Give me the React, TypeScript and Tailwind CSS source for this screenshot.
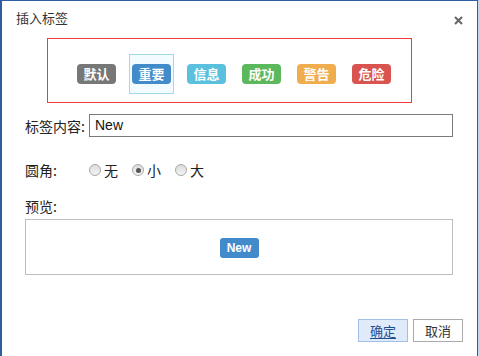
import React from "react";

const cjk = { fontFamily: '"Noto Sans CJK SC", "Liberation Sans", sans-serif' };
const latin = { fontFamily: '"Liberation Sans", "Noto Sans CJK SC", sans-serif' };

const badges = [
  { t: "默认", c: "bg-[#777777]" },
  { t: "重要", c: "bg-[#428bca]" },
  { t: "信息", c: "bg-[#5bc0de]" },
  { t: "成功", c: "bg-[#5cb85c]" },
  { t: "警告", c: "bg-[#f0ad4e]" },
  { t: "危险", c: "bg-[#d9534f]" },
];

function Radio({ checked }: { checked?: boolean }) {
  return (
    <span className="w-[12px] h-[12px] rounded-full border border-[#a8a8a8] bg-gradient-to-b from-[#dcdcdc] to-[#f4f4f4] flex items-center justify-center shrink-0">
      {checked && <span className="w-[5px] h-[5px] rounded-full bg-[#555]" />}
    </span>
  );
}

export default function App() {
  return (
    <div className="w-[480px] h-[356px] bg-white flex overflow-hidden" style={cjk}>
      <div className="flex-1 flex flex-col border-l-2 border-t border-[#2d5fa0] text-[#333]">
        <div className="h-[37px] flex items-start justify-between pt-[8px] pl-[14px] pr-[14px]">
          <span className="text-[13px] leading-[18px] text-[#333]">插入标签</span>
          <svg width="9" height="9" viewBox="0 0 9 9" className="mt-[7px]">
            <path d="M1 1 L8 8 M8 1 L1 8" stroke="#666" strokeWidth="2" />
          </svg>
        </div>

        <div className="ml-[45px] w-[365px] h-[65px] border border-[#f23a3a] pl-[26px] pt-[15px] flex gap-[10px] items-start">
          {badges.map((b, i) => (
            <div
              key={b.t}
              className={
                i === 1
                  ? "w-[45px] h-[40px] border border-[#a3d9e6] bg-[#f2fbff] flex items-center justify-center"
                  : "w-[45px] h-[40px] border border-transparent flex items-center justify-center"
              }
            >
              <span
                className={`w-[39px] h-[20px] rounded-[4px] ${b.c} text-white font-bold text-[13px] leading-[20px] text-center`}
              >
                {b.t}
              </span>
            </div>
          ))}
        </div>

        <div className="mt-[11px] flex items-center ml-[23px]">
          <span className="w-[64px] text-[14px] leading-[20px] text-[#222]">标签内容:</span>
          <div className="w-[364px] h-[23px] border border-[#7a7a7a] flex items-center pl-[5px] text-[14px] text-[#111]" style={latin}>
            New
          </div>
        </div>

        <div className="mt-[23px] flex items-center ml-[23px] h-[20px]">
          <span className="w-[64px] text-[14px] leading-[20px] text-[#222]">圆角:</span>
          <div className="flex items-center text-[14px] text-[#222]">
            <Radio />
            <span className="ml-[3px] mr-[14px]">无</span>
            <Radio checked />
            <span className="ml-[3px] mr-[14px]">小</span>
            <Radio />
            <span className="ml-[3px]">大</span>
          </div>
        </div>

        <div className="mt-[16px] ml-[23px] h-[20px] text-[14px] leading-[20px] text-[#222]">预览:</div>

        <div className="mt-[3px] ml-[23px] w-[428px] h-[56px] border border-[#bdbdbd] flex items-center justify-center pt-[2px]">
          <span className="w-[39px] h-[20px] rounded-[3px] bg-[#428bca] text-white font-bold text-[12px] leading-[20px] text-center" style={latin}>
            New
          </span>
        </div>

        <div className="mt-auto mb-[14px] flex justify-end gap-[5px] pr-[14px]">
          <button className="w-[50px] h-[23px] border border-[#a3bfe6] bg-[#dfeafb] text-[13px] text-[#1f4f8f] underline underline-offset-2 leading-none">
            确定
          </button>
          <button className="w-[50px] h-[23px] border border-[#aaaaaa] bg-white text-[13px] text-[#333] leading-none">
            取消
          </button>
        </div>
      </div>
      <div className="w-px bg-[#2d5fa0]" />
      <div className="w-[2px] bg-[#c4d6ee]" />
    </div>
  );
}
